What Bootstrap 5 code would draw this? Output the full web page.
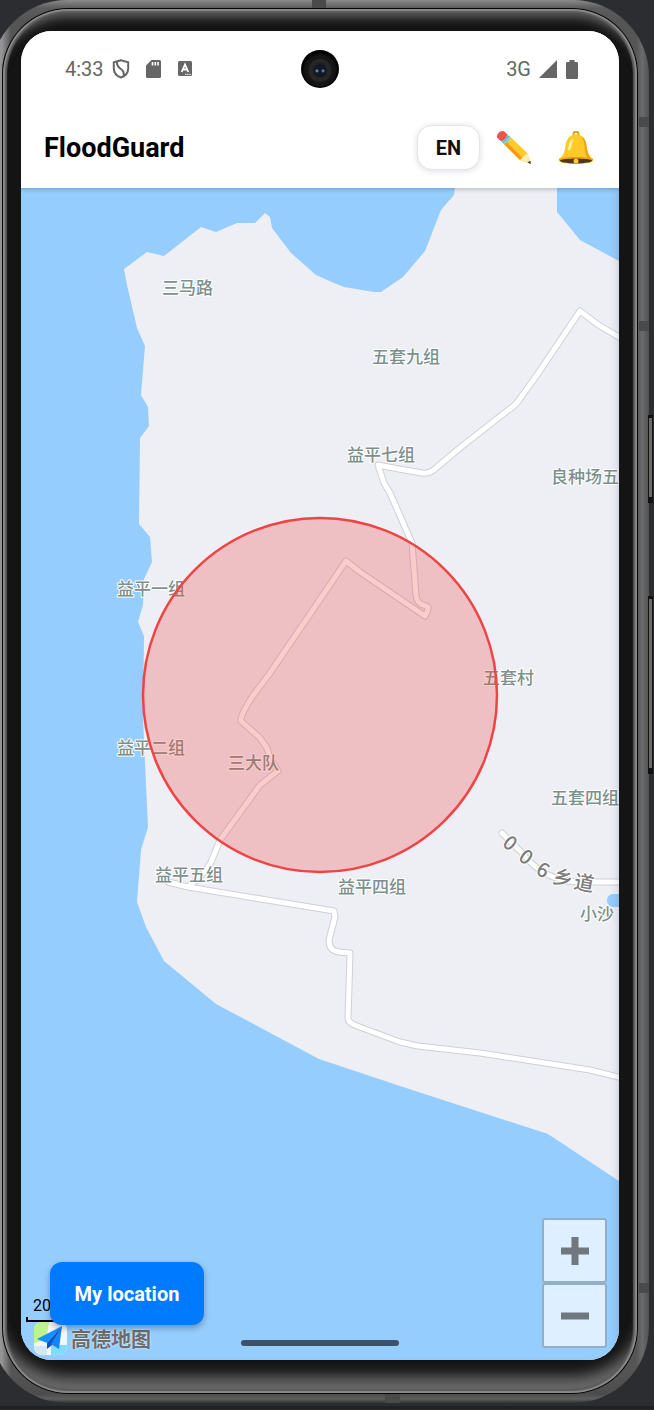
<!DOCTYPE html>
<html lang="en">
<head>
<meta charset="utf-8">
<meta name="viewport" content="width=device-width, initial-scale=1">
<title>FloodGuard</title>
<link href="https://cdn.jsdelivr.net/npm/bootstrap@5.3.0/dist/css/bootstrap.min.css" rel="stylesheet">
<style>
  body { background: #2b2d31; font-family: Roboto, "Noto Sans CJK SC", sans-serif; }
  .stage { border-bottom: 3px solid #1f2024; padding-bottom: 3px; }

  /* Metal case, bezel and glass, from the outside in */
  .phone-rim {
    margin: 0 5px 0 -9px;
    padding: 8px 11px 9px;
    border-radius: 76px;
    background:
      linear-gradient(#8a8a8a, #5c5c5c 8px, transparent 20px),
      linear-gradient(0deg, #333 0, #5e5e5e 4px, #4c4c4c 9px, transparent 30px),
      linear-gradient(90deg, #444, #999 10px, #555 20px, #555 98%, #6b6b6b 99%, #505050);
  }
  .phone-bezel {
    padding: 23px 19px 34px;
    border-radius: 66px;
    background: #141414;
    box-shadow:
      inset 0 0 0 1px #050505,
      inset 0 0 1px 3px #8a8a8a,
      inset 0 0 1px 5px #5a5a5a,
      inset 0 18px 10px -8px #5a5a5a,
      inset 0 -26px 14px -8px #686868;
  }
  .seam { background: #4a4a4a; }
  .seam-top { top: 0; left: 312px; width: 14px; height: 8px; }
  .seam-bottom { bottom: 3px; left: 385px; width: 15px; height: 9px; }
  .seam-side { right: 5px; width: 10px; height: 10px; }
  .side-key { right: 1px; width: 5px; background: #6b6b6b; border: solid #111; border-width: 3px 1px 6px; }
  .at-1 { top: 117px; } .at-2 { top: 321px; } .at-3 { top: 1283px; }
  .key-power { top: 415px; height: 88px; }
  .key-volume { top: 596px; height: 178px; }

  .screen { border-radius: 31px; background: #fff; }
  .status-bar { height: 76px; padding: 0 40px; color: #666; font-size: 20px; line-height: 24px; z-index: 2; }
  .camera {
    width: 38px; height: 38px;
    background: radial-gradient(circle at 42% 55%, #4b8f97 0 1px, transparent 2px),
                radial-gradient(circle at 58% 55%, #5a6fc0 0 1px, transparent 2px),
                radial-gradient(circle at 50% 54%, #141820 0 6px, #262626 8px 11px, #151515 12px 15px, #000 18px);
  }
  .app-bar { height: 81px; padding: 0 23px 0 23px; z-index: 1; box-shadow: 0 1px 5px rgba(0,0,0,.22); }
  .app-title { font-size: 27px; line-height: 32px; font-weight: 700; color: #000; }
  .lang-btn {
    width: 63px; height: 45px; border: 1px solid #e4e5ec; border-radius: 15px; background: #fff;
    color: #111; font-size: 20px; line-height: 24px; font-weight: 700;
    box-shadow: 0 1px 6px rgba(0,0,0,.14);
  }
  .lang-btn:hover { background: #f6f6f6; border-color: #e4e5ec; }

  .place { font: 500 17px "Noto Sans CJK SC", sans-serif; fill: #7d908a; stroke: #fff; stroke-width: 2px; paint-order: stroke; stroke-linejoin: round; }
  .road-name { font: 500 20px "Noto Sans CJK SC", sans-serif; fill: #7c7c7c; stroke: #fff; stroke-width: 2px; paint-order: stroke; text-anchor: middle; }
  .locate-btn {
    left: 29px; bottom: 35px; width: 154px; height: 63px; border: 0; border-radius: 12px; background: #007bff;
    color: #fff; font-size: 20px; font-weight: 700; box-shadow: 0 3px 6px rgba(0,0,0,.3);
  }
  .locate-btn:hover { background: #0070ea; color: #fff; }
  .zoom-box { right: 12px; bottom: 12px; }
  .zoom-box .btn { width: 65px; height: 65px; background: #deefff; border: 2px solid #94aec5; border-radius: 3px; }
  .scale-box { left: 5px; bottom: 38px; width: 70px; height: 26px; padding-left: 7px; font-size: 16px; line-height: 20px; color: #000; border-bottom: 2px solid #000; }
  .scale-box::before { content: ""; position: absolute; left: 0; bottom: 0; width: 2px; height: 3px; background: #000; }
  .provider { left: 13px; bottom: 5px; }
  .provider-name { font: 700 20px/32px "Noto Sans CJK SC", sans-serif; color: #6c6c6c; text-shadow: 0 0 2px #fff; }
  .home-bar { bottom: 14px; width: 158px; height: 6px; background: #3c5268; }
  .edge-shade { box-shadow: inset -6px 0 10px -6px rgba(40,60,90,.25); pointer-events: none; }
</style>
</head>
<body>
<main class="stage position-relative overflow-hidden">
  <div class="phone-rim">
    <div class="phone-bezel">
      <div class="screen overflow-hidden d-flex flex-column">

        <div class="status-bar d-flex align-items-center position-relative bg-white">
          <div class="d-flex align-items-center flex-fill w-50 ps-1">
            <span>4:33</span>
            <svg class="ms-2" width="18" height="20" viewBox="0 0 18 20" fill="none" stroke="#666" stroke-width="2"><path d="M9 1.2 1.8 3.3v6.2c0 4 3 7.500 7.200 9 4.200-1.500 7.200-5 7.200-9V3.300z"/><path d="M5 2.500c-.5 5 2 6 4 7.500s3.500 3.500 2.500 7"/></svg>
            <svg class="ms-3" width="15" height="18" viewBox="0 0 15 18"><path fill="#666" d="M5.500 0H13.500Q15 0 15 1.500V16.500Q15 18 13.500 18H1.500Q0 18 0 16.500V5.500z"/><path stroke="#fff" stroke-width="1.600" d="M6.500 2v3.500M9.300 2v3.500M12 2v3.500"/></svg>
            <svg class="ms-3" width="16" height="16" viewBox="1 0 16 16"><rect x="2" width="14" height="15" rx="1.500" fill="#666"/><path d="M5.700 11 9 3.500 12.300 11M7 8.500h4" fill="none" stroke="#fff" stroke-width="1.800"/><path d="M9 13.300h6" stroke="#fff" stroke-dasharray="1.500 .6"/></svg>
          </div>
          <div class="camera rounded-circle flex-shrink-0"></div>
          <div class="d-flex align-items-center justify-content-end flex-fill w-50">
            <span>3G</span>
            <svg class="ms-2" width="18" height="18" viewBox="0 0 18 18"><path d="M18 0v18H0z" fill="#666"/></svg>
            <svg class="ms-2" width="14" height="19" viewBox="0 0 14 19"><path d="M4.500 0h5v2h2.300q1.200 0 1.200 1.200v14.600q0 1.200-1.200 1.200H2.200Q1 19 1 17.800V3.200Q1 2 2.200 2h2.300z" fill="#666"/></svg>
          </div>
        </div>

        <header class="app-bar d-flex align-items-center position-relative bg-white">
          <h1 class="app-title mb-0 me-auto">FloodGuard</h1>
          <button type="button" class="lang-btn btn p-0">EN</button>
          <button type="button" class="btn p-0 border-0 ms-3 lh-1" aria-label="Edit">
            <svg width="36" height="34" viewBox="0 0 36 34">
              <path d="M6.500 11.500 13 5l18 17 3.800 9.500q.4 1.500-1.100 1.100L24 29z" fill="#ffb803"/>
              <path d="M9 9 27 26.500l4-4.500L13 5z" fill="#ffca28"/>
              <path d="M6.500 11.500 24 29l2-2L8.500 9.500z" fill="#f79329"/>
              <path d="m24 29 2.300-2.200.7-1.500 1.500-.5 2.500-2.800 3.800 9.500q.4 1.500-1.100 1.100z" fill="#ffecb3"/>
              <path d="m31.500 31.800 2.600-2.300.7 2q.4 1.500-1.100 1.100z" fill="#41494d"/>
              <path d="M4.500 9.500 11 3l3.500 3.200Q12.500 12 8 13z" fill="#82d0e2"/>
              <path d="M1 6Q.5 3 3.500 1T9 1L11.500 3.500Q10 8.500 5 10.200L2.200 7.700Q1.200 7 1 6z" fill="#ef5350"/>
              <path d="m7 11.500 6-6.500" stroke="#5da9be" stroke-width="1"/>
            </svg>
          </button>
          <button type="button" class="btn p-0 border-0 ms-4 lh-1" aria-label="Alerts">
            <svg width="40" height="34" viewBox="0 0 40 34">
              <circle cx="20" cy="3" r="2.500" fill="none" stroke="#e59c0d" stroke-width="2"/>
              <path d="M20 3.500c-7 0-9.500 5-10.500 11C8.500 21 8 24 3 28.500c-1.500 2 2 4.500 17 4.500s18.500-2.500 17-4.500c-5-4.500-5.500-7.500-6.500-14C29.500 8.500 27 3.500 20 3.500z" fill="#ffca28"/>
              <path d="M25 5c4 3 3 13 5 19 1 3 3 5 7 5-5-4.500-5.500-8-6.500-14.500C29.800 10 28.500 6.500 25 5z" fill="#eda600"/>
              <path d="M17.500 7c-4 2-5 8-5.500 12 2 1 3-1 3.500-4s1.500-6 2-8z" fill="#fff59d"/>
              <ellipse cx="20" cy="29.500" rx="16" ry="3" fill="#4e342e"/>
              <path d="M3 28.500c6-2.500 28-2.500 34 0" fill="none" stroke="#f2a600" stroke-width="1.500"/>
              <circle cx="20" cy="30" r="2.500" fill="#ffca28"/>
            </svg>
          </button>
        </header>

        <section class="position-relative" aria-label="Map">
          <svg class="d-block w-100" viewBox="21 188 598 1172" role="img" aria-label="Flood risk area">
            <rect x="21" y="188" width="598" height="1172" fill="#95cdff"/>
            <path fill="#eeeff4" d="M455 188 454 195 441 210 425 251 403 277 381 292 374 292 344 287 334 283 316 275 291 253 272 228 270 217 265 213 255 223 237 223 216 232 201 227 164 256 147 252 124 269 127 285 137 328 145 346 141 395 148 407 149 426 140 438 139 524 150 537 152 562 144 579 143 605 138 622 144 636 143 717 145 763 148 827 141 850 137 902 146 927 164 961 216 1004 319 1059 400 1086 548 1134 619 1181V261L580 240 557 212V188z"/>
            <rect x="607" y="894" width="24" height="13" rx="6" fill="#95cdff"/>
            <defs>
              <path id="roads" d="M622 339 597 324 580 311 537 375 519 400 Q515 406 507 411L461 447 436 468Q430 474 422 473L399 469 378 465 384 483 390 493 404 525 412 543 416 595Q417 602 421 604L428 607Q429 609 425 616L360 572 346 561 270 673 252 697Q240 716 241 721L260 738 267 748 270 758 278 771 260 785 247 803 220 840 211 862Q206 873 188 887M168 882 188 887 267 900 334 911 335 917 329 940Q329 951 339 952L350 953 348 1018Q348 1023 357 1026L400 1042 418 1046 480 1053 590 1070 622 1078M502 833 522 853Q545 882 580 882H622"/>
            </defs>
            <g fill="none" stroke-linejoin="round" stroke-linecap="round">
              <use href="#roads" stroke="#cfd0d6" stroke-width="7"/>
              <use href="#roads" stroke="#fff" stroke-width="5"/>
            </g>
            <g class="place">
              <text x="162" y="294">三马路</text>
              <text x="372" y="363">五套九组</text>
              <text x="347" y="461">益平七组</text>
              <text x="551" y="483">良种场五</text>
              <text x="117" y="595">益平一组</text>
              <text x="483" y="684">五套村</text>
              <text x="117" y="754">益平二组</text>
              <text x="228" y="769">三大队</text>
              <text x="551" y="804">五套四组</text>
              <text x="155" y="881">益平五组</text>
              <text x="338" y="893">益平四组</text>
              <text x="580" y="920">小沙</text>
            </g>
            <g class="road-name">
              <text transform="translate(510 843) rotate(40)" y="7">0</text>
              <text transform="translate(526 857) rotate(38)" y="7">0</text>
              <text transform="translate(543 870) rotate(28)" y="7">6</text>
              <text transform="translate(563 878) rotate(15)" y="7">乡</text>
              <text transform="translate(584 883) rotate(10)" y="7">道</text>
            </g>
            <circle cx="320" cy="695" r="177" fill="#ef4444" fill-opacity=".27" stroke="#ef4444" stroke-width="2.500"/>
          </svg>
          <div class="edge-shade position-absolute top-0 bottom-0 start-0 end-0"></div>

          <div class="scale-box position-absolute">20</div>
          <div class="provider position-absolute d-flex align-items-center gap-1">
            <svg width="33" height="33" viewBox="0 0 33 33">
              <defs><clipPath id="tile"><rect width="33" height="33" rx="8"/></clipPath></defs>
              <g clip-path="url(#tile)"><path fill="#f4f7f8" d="M0 0h33v33H0z"/><path fill="#bdf28c" d="M0 0h15L12 18 0 21z"/><path fill="#7fdcff" d="M17 23h16v10H17z"/><path fill="#d5e8f1" d="M0 24h13v9H0z"/></g>
              <path fill="#1690ff" d="M28 4 3 17l10 4z"/><path fill="#0756c8" d="m28 4-15 17v6l5-4z"/><path fill="#1485f5" d="m28 4-11 18 8 5z"/>
            </svg>
            <span class="provider-name">高德地图</span>
          </div>
          <button type="button" class="locate-btn btn position-absolute p-0">My location</button>
          <div class="zoom-box position-absolute d-flex flex-column">
            <button type="button" class="btn p-0" aria-label="Zoom in"><svg width="28" height="28" viewBox="0 0 28 28" class="d-block mx-auto"><path d="M14 0v28M0 14h28" stroke="#70777d" stroke-width="7"/></svg></button>
            <button type="button" class="btn p-0" aria-label="Zoom out"><svg width="28" height="28" viewBox="0 0 28 28" class="d-block mx-auto"><path d="M0 14h28" stroke="#70777d" stroke-width="7"/></svg></button>
          </div>
          <div class="home-bar position-absolute start-50 translate-middle-x rounded-pill"></div>
        </section>
      </div>
    </div>
  </div>
  <div class="seam seam-top position-absolute"></div>
  <div class="seam seam-bottom position-absolute"></div>
  <div class="seam seam-side at-1 position-absolute"></div>
  <div class="seam seam-side at-2 position-absolute"></div>
  <div class="seam seam-side at-3 position-absolute"></div>
  <div class="side-key key-power position-absolute"></div>
  <div class="side-key key-volume position-absolute"></div>
</main>
<script src="https://cdn.jsdelivr.net/npm/bootstrap@5.3.0/dist/js/bootstrap.bundle.min.js"></script>
</body>
</html>
